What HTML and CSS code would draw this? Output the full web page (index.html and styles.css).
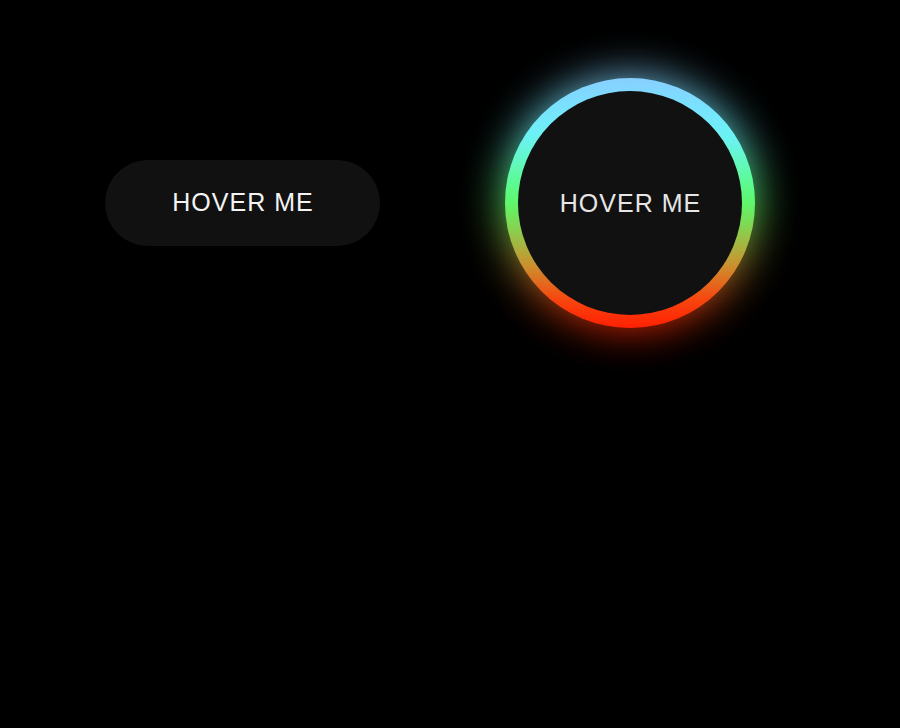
FILE: index.html
```html
<!DOCTYPE html>
<html>
<head>
<meta charset="utf-8">
<link rel="stylesheet" href="styles.css">
</head>
<body>
<div class="stage">
  <button class="pill">HOVER ME</button>
  <div class="ring">
    <button class="face">HOVER ME</button>
  </div>
</div>
</body>
</html>
```
FILE: styles.css
```css
html, body {
  margin: 0;
  background: #000;
  height: 100%;
}
.stage {
  display: flex;
  align-items: center;
  gap: 125px;
  padding: 78px 0 0 105px;
}
button {
  font-family: "Liberation Sans", Arial, sans-serif;
  font-size: 25px;
  letter-spacing: 1px;
  color: #f4f4f4;
  background: #111;
  border: none;
  padding: 0;
  margin: 0;
}
.pill {
  width: 275px;
  height: 86px;
  border-radius: 43px;
  padding-left: 1px;
  margin-top: -1px;
}
.ring {
  position: relative;
  width: 250px;
  height: 250px;
  border-radius: 50%;
  padding: 13px;
  box-sizing: border-box;
  background: linear-gradient(to bottom, #8ccaff 0%, #6cf3ff 24%, #55ff66 50%, #d0902e 74%, #ff3a0a 88%, #ff1800 100%);
  isolation: isolate;
}
.ring::before {
  content: "";
  position: absolute;
  inset: 0;
  border-radius: 50%;
  background: linear-gradient(to bottom, #8ccaff 0%, #6cf3ff 24%, #55ff66 50%, #d0902e 74%, #ff3a0a 88%, #ff1800 100%);
  filter: blur(22px);
  opacity: 0.9;
  z-index: -1;
}
.face {
  display: block;
  width: 100%;
  height: 100%;
  border-radius: 50%;
  color: #e6e6e6;
  padding-left: 1px;
}
```
